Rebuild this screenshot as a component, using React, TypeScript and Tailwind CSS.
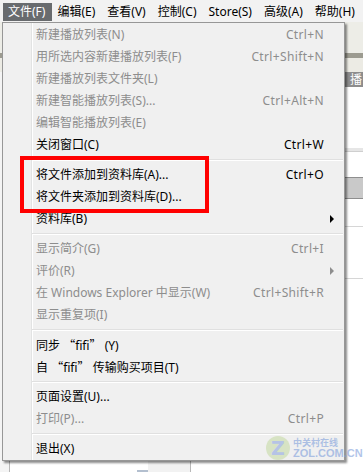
import React from "react";

type Item =
  | { sep: true }
  | { sep?: false; label: React.ReactNode; key: string; shortcut?: string; sub?: boolean; on?: boolean };

const Q = ({ c }: { c: string }) => (
  <span className="font-['Noto_Sans_CJK_SC',sans-serif]">{c}</span>
);

const items: Item[] = [
  { key: "n", label: "新建播放列表(N)", shortcut: "Ctrl+N" },
  { key: "f", label: "用所选内容新建播放列表(F)", shortcut: "Ctrl+Shift+N" },
  { key: "l", label: "新建播放列表文件夹(L)" },
  { key: "s", label: "新建智能播放列表(S)...", shortcut: "Ctrl+Alt+N" },
  { key: "e", label: "编辑智能播放列表(E)" },
  { key: "c", label: "关闭窗口(C)", shortcut: "Ctrl+W", on: true },
  { sep: true },
  { key: "a", label: "将文件添加到资料库(A)...", shortcut: "Ctrl+O", on: true },
  { key: "d", label: "将文件夹添加到资料库(D)...", on: true },
  { key: "b", label: "资料库(B)", sub: true, on: true },
  { sep: true },
  { key: "g", label: "显示简介(G)", shortcut: "Ctrl+I" },
  { key: "r", label: "评价(R)", sub: true },
  { key: "w", label: "在 Windows Explorer 中显示(W)", shortcut: "Ctrl+Shift+R" },
  { key: "i", label: "显示重复项(I)" },
  { sep: true },
  {
    key: "y",
    label: (
      <>
        同步 <Q c="“" />fifi<Q c="”" /> (Y)
      </>
    ),
    on: true,
  },
  {
    key: "t",
    label: (
      <>
        自 <Q c="“" />fifi<Q c="”" /> 传输购买项目(T)
      </>
    ),
    on: true,
  },
  { sep: true },
  { key: "u", label: "页面设置(U)...", on: true },
  { key: "p", label: "打印(P)...", shortcut: "Ctrl+P" },
  { sep: true },
  { key: "x", label: "退出(X)", on: true },
];

const menus = ["文件(F)", "编辑(E)", "查看(V)", "控制(C)", "Store(S)", "高级(A)", "帮助(H)"];

export default function App() {
  return (
    <div className="relative w-[363px] h-[472px] overflow-hidden bg-white text-[12px] text-black font-['Noto_Sans','Noto_Sans_CJK_SC',sans-serif]">
      {/* Menu bar */}
      <div className="flex h-[22px] items-start overflow-hidden bg-[#f2f2f2] pl-[3px] pt-[3px]">
        {menus.map((m, i) => (
          <div
            key={m}
            className={`h-[18px] shrink-0 whitespace-nowrap pl-[5px] pr-[7px] leading-[18px] ${
              i === 0 ? "bg-[#686b6e] text-white" : "text-black"
            }`}
          >
            {m}
          </div>
        ))}
      </div>

      {/* Window behind the menu */}
      <div className="flex flex-col">
        <div className="h-[31px] bg-[#ededE7]" />
        <div className="h-[5px] bg-[#9c9b90]" />
        <div className="h-[14px] bg-[#ecebe4]" />
        <div className="flex h-[410px]">
          <div className="flex w-[190px]">
            <div className="w-[9px] bg-[#f4f4f4]" />
            <div className="w-[128px] border-l border-[#b8b8b8] bg-white" />
            <div className="flex w-[11px] flex-col justify-end">
              <div className="h-[12px] bg-[#b3bfcf]" />
            </div>
            <div className="flex-1 bg-[#f2f2f2]" />
          </div>
          <div className="flex flex-1 flex-col border-l border-[#b8b8b8] bg-white">
            <div className="flex h-[15px] items-center justify-end bg-[#8d8d8d] pr-[1px] text-[12px] text-white">
              播
            </div>
            <div className="h-[61px] bg-white" />
            <div className="h-[4px] border-b border-[#cfcfcf] bg-[#e6e6e6]" />
            <div className="h-[25px] bg-white" />
            <div className="h-[22px] border-y border-[#8e8e8e] bg-[#c9c9c9]" />
            <div className="h-[28px] border-b border-[#d6d6d6] bg-white" />
            <div className="h-[52px] border-b border-[#d6d6d6] bg-white" />
            <div className="flex-1 bg-white" />
          </div>
        </div>
      </div>

      {/* File dropdown */}
      <div className="absolute left-[2px] top-[22px] w-[343px] border border-[#979797] bg-[#f0f0f0] pt-[1px] shadow-[2px_2px_2px_rgba(0,0,0,0.45)]">
        <div className="absolute left-[28px] top-0 bottom-0 w-[2px] border-l border-[#e2e3e3] bg-white" />
        {items.map((it, idx) =>
          it.sep ? (
            <div key={idx} className="relative flex h-[8px] items-center pl-[29px] pr-[1px]">
              <div className="h-[2px] flex-1 border-t border-[#e0e0e0] bg-white" />
            </div>
          ) : (
            <div
              key={it.key}
              className={`relative flex h-[22px] items-center pl-[33px] leading-[22px] ${
                it.on ? "text-black" : "text-[#8d8d8d]"
              }`}
            >
              <div className="flex-1 whitespace-pre">{it.label}</div>
              {it.shortcut && <div className="tracking-[0.35px]">{it.shortcut}</div>}
              <div className="flex w-[20px] items-center pl-[6px]">
                {it.sub && (
                  <div
                    className={`h-0 w-0 border-y-[4px] border-l-[4px] border-y-transparent ${
                      it.on ? "border-l-black" : "border-l-[#8d8d8d]"
                    }`}
                  />
                )}
              </div>
            </div>
          )
        )}
      </div>

      {/* Red highlight box */}
      <div className="absolute left-[20px] top-[156px] h-[57px] w-[189px] border-[4px] border-[#ff0000]" />

      {/* Watermark */}
      <div className="absolute left-[266px] top-[436px] flex items-center gap-[3px] opacity-60">
        <div className="flex h-[24px] w-[24px] items-center justify-center rounded-full bg-[#c8dca8] text-[19px] font-bold leading-none text-[#8fa6e0] font-['DejaVu_Sans',sans-serif]">
          Z
        </div>
        <div className="flex flex-col gap-[1px]">
          <span className="text-[9px] font-bold leading-[9px] text-[#7f9fdc] font-['Noto_Sans_CJK_SC',sans-serif]">中关村在线</span>
          <span className="text-[11px] font-bold leading-[10px] text-[#7f9fdc] font-['Liberation_Sans',sans-serif]">ZOL.COM.CN</span>
        </div>
      </div>
    </div>
  );
}
